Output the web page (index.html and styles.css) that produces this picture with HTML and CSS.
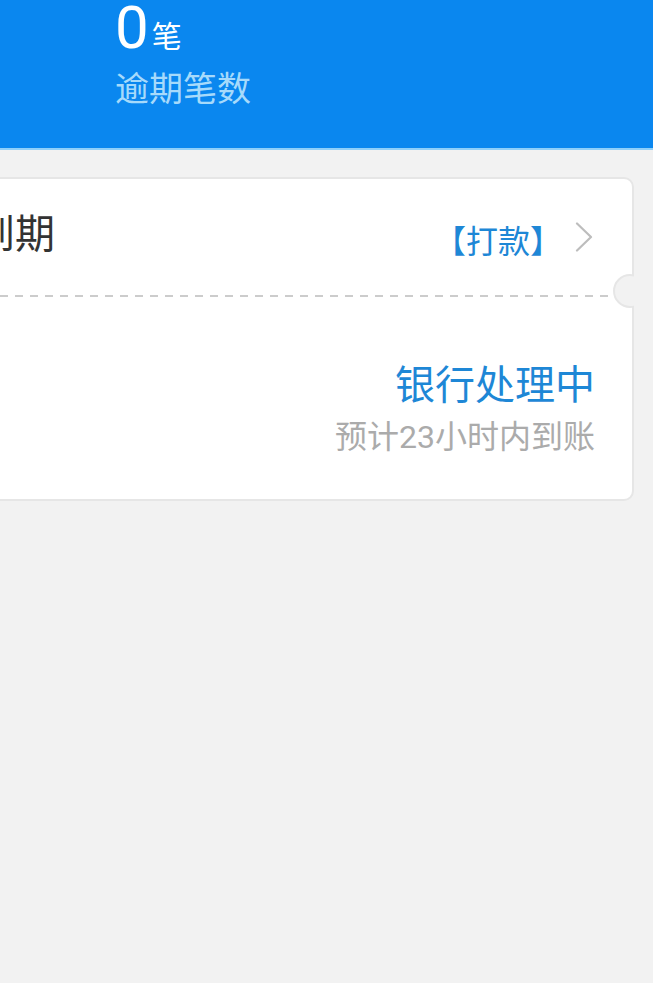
FILE: index.html
```html
<!DOCTYPE html>
<html lang="zh-CN">
<head>
<meta charset="utf-8">
<title>逾期笔数</title>
<link rel="stylesheet" href="styles.css">
</head>
<body>
<header class="header">
  <div class="stat">
    <span class="stat-num">0</span><span class="stat-unit">笔</span>
  </div>
  <div class="stat-label">逾期笔数</div>
</header>

<section class="card">
  <div class="card-top">
    <div class="card-title">到期</div>
    <div class="card-action">
      <span class="action-text">【打款】</span>
      <svg class="chevron" width="18" height="30" viewBox="0 0 18 30">
        <path d="M2 1.5 L16 15 L2 28.5" fill="none" stroke="#bdbdbd" stroke-width="2.2" stroke-linecap="round" stroke-linejoin="round"/>
      </svg>
    </div>
  </div>
  <div class="card-sep"></div>
  <span class="notch"></span>
  <div class="card-bottom">
    <div class="status">银行处理中</div>
    <div class="status-note">预计23小时内到账</div>
  </div>
</section>
</body>
</html>
```

FILE: styles.css
```css
html, body {
  margin: 0;
  padding: 0;
}
body {
  background: #f2f2f2;
  font-family: Roboto, "Noto Sans CJK SC", sans-serif;
  width: 653px;
  overflow: hidden;
}
.header {
  background: #0a87ef;
  height: 148px;
  border-bottom: 2px solid #8fd0fa;
  padding-left: 115px;
  box-sizing: content-box;
}
.stat {
  display: flex;
  align-items: baseline;
  height: 56px;
}
.stat-num {
  font-size: 60px;
  line-height: 56px;
  color: #ffffff;
}
.stat-unit {
  font-family: "Noto Sans CJK SC", sans-serif;
  font-size: 30px;
  line-height: 56px;
  color: #ffffff;
  margin-left: 3px;
  position: relative;
  top: -1px;
}
.stat-label {
  font-family: "Noto Sans CJK SC", sans-serif;
  font-size: 34px;
  line-height: 40px;
  color: #a6dafb;
  margin-top: 11px;
}
.card {
  position: relative;
  margin: 27px 19px 0 -60px;
  background: #ffffff;
  border: 2px solid #e6e6e6;
  border-radius: 10px;
  font-family: "Noto Sans CJK SC", sans-serif;
}
.card-top {
  height: 116px;
  display: flex;
  align-items: center;
  justify-content: space-between;
  padding: 0 39px 0 33px;
}
.card-title {
  font-size: 40px;
  line-height: 48px;
  color: #333333;
  margin-bottom: 13px;
}
.card-action {
  display: flex;
  align-items: center;
}
.action-text {
  font-size: 32px;
  line-height: 40px;
  color: #1e87d6;
  margin-top: 3px;
}
.chevron {
  display: block;
  margin-left: 13px;
}
.card-sep {
  height: 2px;
  background-image: linear-gradient(to right, #cccccc 8px, transparent 8px);
  background-size: 15px 2px;
  background-position: 13px 0;
  background-repeat: repeat-x;
}
.notch {
  position: absolute;
  top: 95px;
  right: -15px;
  width: 34px;
  height: 34px;
  box-sizing: border-box;
  border: 2px solid #e6e6e6;
  border-radius: 50%;
  background: #f2f2f2;
  clip-path: inset(0 13px 0 0);
}
.card-bottom {
  padding: 61px 37px 44px 33px;
  text-align: right;
}
.status {
  font-size: 40px;
  line-height: 48px;
  color: #1e87d6;
}
.status-note {
  font-family: Roboto, "Noto Sans CJK SC", sans-serif;
  font-size: 32px;
  line-height: 36px;
  color: #ababab;
  margin-top: 13px;
}
```
